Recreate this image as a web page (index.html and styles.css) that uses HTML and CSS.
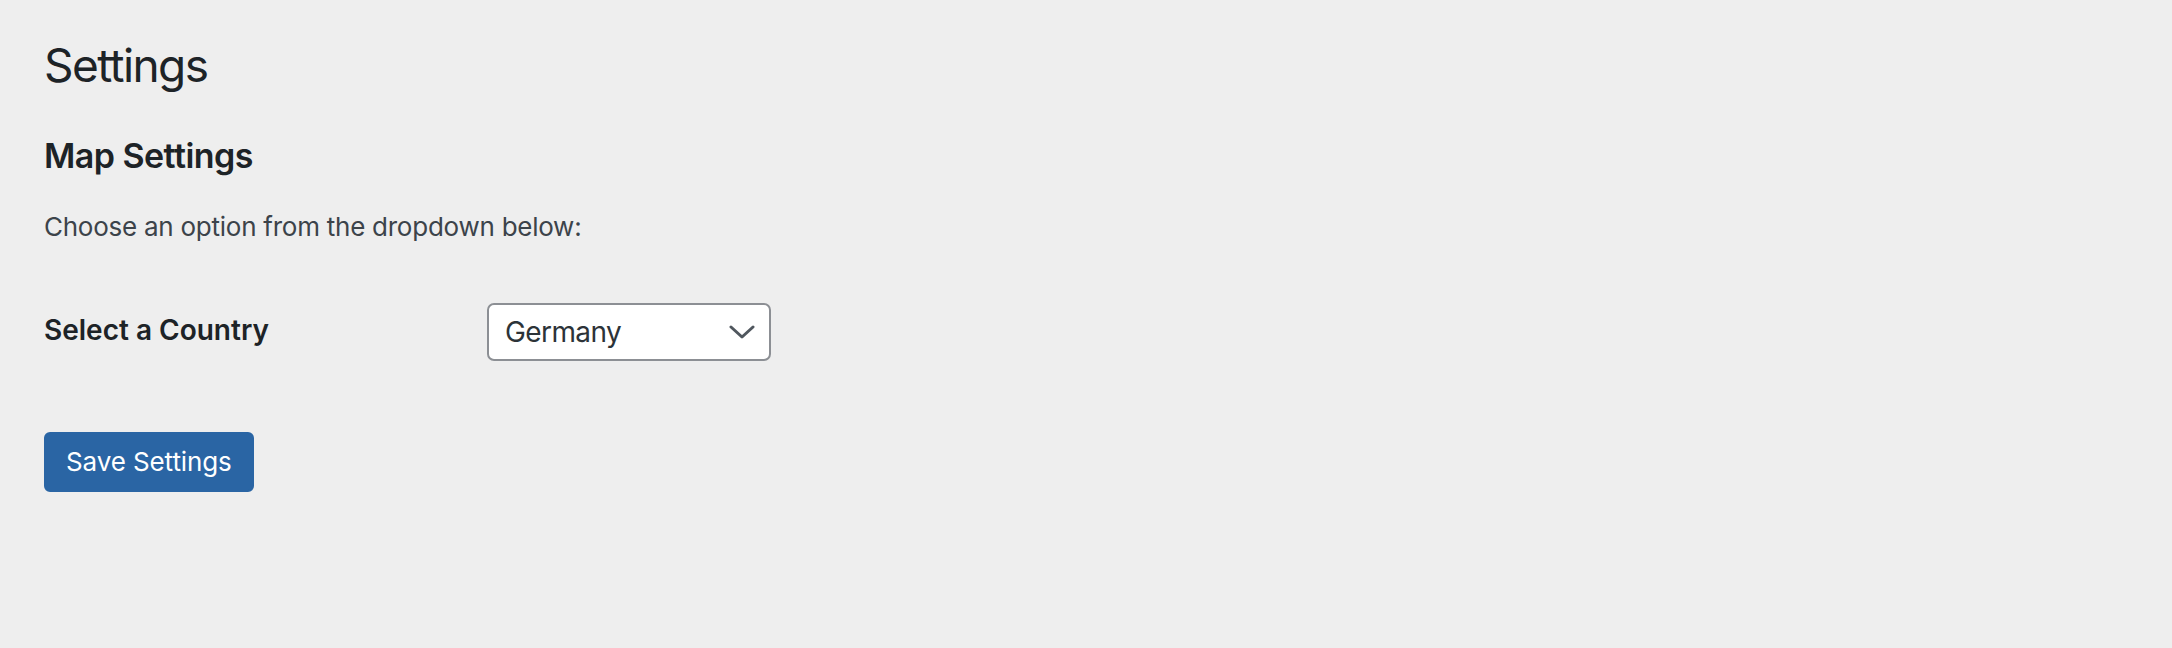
FILE: index.html
```html
<!DOCTYPE html>
<html lang="en">
<head>
<meta charset="utf-8">
<title>Settings</title>
<link rel="stylesheet" href="styles.css">
</head>
<body>
<div class="wrap">
  <h1 class="page-title">Settings</h1>
  <h2 class="section-title">Map Settings</h2>
  <p class="intro">Choose an option from the dropdown below:</p>
  <form class="settings-form">
    <div class="form-row">
      <label class="field-label" for="country">Select a Country</label>
      <div class="select-box" id="country">
        <span class="select-value">Germany</span>
        <svg class="chevron" width="26" height="16" viewBox="0 0 26 16" aria-hidden="true">
          <polyline points="2,3 13,13 24,3" fill="none" stroke="#50575e" stroke-width="3" stroke-linecap="round" stroke-linejoin="round"/>
        </svg>
      </div>
    </div>
    <button type="button" class="button-primary">Save Settings</button>
  </form>
</div>
</body>
</html>
```

FILE: styles.css
```css
html, body {
  margin: 0;
  padding: 0;
}

body {
  background: #eeeeee;
  color: #3c434a;
  font-family: Inter, "Noto Sans", "Liberation Sans", sans-serif;
  width: 2172px;
  height: 648px;
  overflow: hidden;
}

.wrap {
  padding: 35px 0 0 44px;
  display: flex;
  flex-direction: column;
  align-items: flex-start;
}

.page-title {
  margin: 0;
  font-size: 46px;
  font-weight: 400;
  line-height: 60px;
  color: #1d2327;
  letter-spacing: -1.6px;
}

.section-title {
  margin: 39px 0 0;
  font-size: 34px;
  font-weight: 600;
  line-height: 44px;
  color: #1d2327;
  letter-spacing: -0.55px;
}

.intro {
  margin: 29px 0 0;
  font-size: 26px;
  line-height: 40px;
  color: #3c434a;
  letter-spacing: -0.25px;
}

.settings-form {
  margin: 0;
  display: flex;
  flex-direction: column;
  align-items: flex-start;
}

.form-row {
  display: flex;
  align-items: flex-start;
  margin-top: 56px;
}

.field-label {
  width: 443px;
  margin-top: 7px;
  font-size: 28px;
  font-weight: 600;
  line-height: 40px;
  color: #1d2327;
}

.select-box {
  box-sizing: border-box;
  width: 284px;
  height: 58px;
  border: 2px solid #8c8f94;
  border-radius: 7px;
  background: #ffffff;
  display: flex;
  align-items: center;
  justify-content: space-between;
  padding: 0 14px 0 16px;
}

.select-value {
  font-size: 28px;
  color: #2c3338;
  line-height: 40px;
  letter-spacing: -0.6px;
}

.chevron {
  display: block;
}

.button-primary {
  margin-top: 71px;
  box-sizing: border-box;
  height: 60px;
  padding: 0 20px;
  border: 2px solid #2a65a4;
  border-radius: 6px;
  background: #2a65a4;
  color: #ffffff;
  font-family: Inter, "Noto Sans", "Liberation Sans", sans-serif;
  font-size: 26px;
  line-height: 56px;
  letter-spacing: -0.1px;
  cursor: pointer;
}
```
